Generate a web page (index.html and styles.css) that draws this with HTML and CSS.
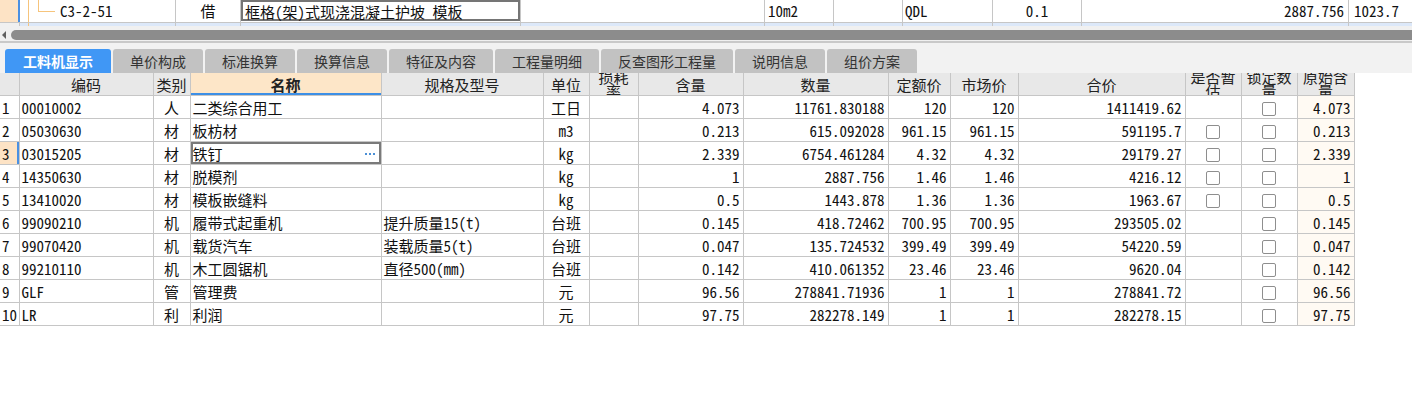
FILE: index.html
```html
<!DOCTYPE html>
<html lang="zh-CN">
<head>
    <meta charset="UTF-8">
    <title>工料机显示</title>
    <link rel="stylesheet" href="styles.css">
</head>
<body>
    <div class="tree-row">
        <div class="c c-hd"></div>
        <div class="c c-code"><span class="tree-v"></span><span class="tree-l"></span>C3-2-51</div>
        <div class="c c-type">借</div>
        <div class="c c-name"><div class="editor">框格(架)式现浇混凝土护坡 模板</div></div>
        <div class="c c-spec"></div>
        <div class="c c-unit">10m2</div>
        <div class="c c-blank"></div>
        <div class="c c-qdl">QDL</div>
        <div class="c c-qty">0.1</div>
        <div class="c c-amt">2887.756</div>
        <div class="c c-last">1023.7</div>
    </div>
    <div class="tree-row peek">
        <div class="c c-hd"></div>
        <div class="c c-code"><span class="tree-v"></span></div>
        <div class="c c-type"></div>
        <div class="c c-name"></div>
        <div class="c c-spec"></div>
        <div class="c c-unit"></div>
        <div class="c c-blank"></div>
        <div class="c c-qdl"></div>
        <div class="c c-qty"></div>
        <div class="c c-amt"></div>
        <div class="c c-last"></div>
    </div>

    <div class="hscroll">
        <span class="arrow"></span>
        <div class="thumb"></div>
    </div>

    <div class="tabs">
        <div class="tab active">工料机显示</div>
        <div class="tab">单价构成</div>
        <div class="tab">标准换算</div>
        <div class="tab">换算信息</div>
        <div class="tab">特征及内容</div>
        <div class="tab">工程量明细</div>
        <div class="tab">反查图形工程量</div>
        <div class="tab">说明信息</div>
        <div class="tab">组价方案</div>
    </div>

    <table class="grid">
        <colgroup>
            <col class="w-rn"><col class="w-code"><col class="w-type"><col class="w-name"><col class="w-spec">
            <col class="w-unit"><col class="w-loss"><col class="w-cont"><col class="w-qty"><col class="w-price">
            <col class="w-mkt"><col class="w-sum"><col class="w-chk"><col class="w-chk"><col class="w-orig">
        </colgroup>
        <thead>
            <tr>
                <th></th>
                <th>编码</th>
                <th>类别</th>
                <th class="sel">名称</th>
                <th>规格及型号</th>
                <th>单位</th>
                <th><div class="two"><span>损耗率</span></div></th>
                <th>含量</th>
                <th>数量</th>
                <th>定额价</th>
                <th>市场价</th>
                <th>合价</th>
                <th><div class="two"><span>是否暂估</span></div></th>
                <th><div class="two"><span>锁定数量</span></div></th>
                <th><div class="two"><span>原始含量</span></div></th>
            </tr>
        </thead>
        <tbody>
            <tr>
                <td class="rn">1</td><td>00010002</td><td class="ctr">人</td><td>二类综合用工</td><td></td>
                <td class="ctr">工日</td><td></td><td class="num">4.073</td><td class="num">11761.830188</td><td class="num">120</td>
                <td class="num">120</td><td class="num">1411419.62</td><td></td><td class="ctr"><span class="cb"></span></td><td class="num orig">4.073</td>
            </tr>
            <tr>
                <td class="rn">2</td><td>05030630</td><td class="ctr">材</td><td>板枋材</td><td></td>
                <td class="ctr">m3</td><td></td><td class="num">0.213</td><td class="num">615.092028</td><td class="num">961.15</td>
                <td class="num">961.15</td><td class="num">591195.7</td><td class="ctr"><span class="cb"></span></td><td class="ctr"><span class="cb"></span></td><td class="num orig">0.213</td>
            </tr>
            <tr class="current">
                <td class="rn">3</td><td>03015205</td><td class="ctr">材</td>
                <td class="editing">铁钉<svg class="more" width="11" height="3" viewBox="0 0 11 3"><rect x="0" y="0" width="2" height="2"/><rect x="4" y="0" width="2" height="2"/><rect x="8" y="0" width="2" height="2"/></svg></td>
                <td></td>
                <td class="ctr">kg</td><td></td><td class="num">2.339</td><td class="num">6754.461284</td><td class="num">4.32</td>
                <td class="num">4.32</td><td class="num">29179.27</td><td class="ctr"><span class="cb"></span></td><td class="ctr"><span class="cb"></span></td><td class="num orig">2.339</td>
            </tr>
            <tr>
                <td class="rn">4</td><td>14350630</td><td class="ctr">材</td><td>脱模剂</td><td></td>
                <td class="ctr">kg</td><td></td><td class="num">1</td><td class="num">2887.756</td><td class="num">1.46</td>
                <td class="num">1.46</td><td class="num">4216.12</td><td class="ctr"><span class="cb"></span></td><td class="ctr"><span class="cb"></span></td><td class="num orig">1</td>
            </tr>
            <tr>
                <td class="rn">5</td><td>13410020</td><td class="ctr">材</td><td>模板嵌缝料</td><td></td>
                <td class="ctr">kg</td><td></td><td class="num">0.5</td><td class="num">1443.878</td><td class="num">1.36</td>
                <td class="num">1.36</td><td class="num">1963.67</td><td class="ctr"><span class="cb"></span></td><td class="ctr"><span class="cb"></span></td><td class="num orig">0.5</td>
            </tr>
            <tr>
                <td class="rn">6</td><td>99090210</td><td class="ctr">机</td><td>履带式起重机</td><td>提升质量15(t)</td>
                <td class="ctr">台班</td><td></td><td class="num">0.145</td><td class="num">418.72462</td><td class="num">700.95</td>
                <td class="num">700.95</td><td class="num">293505.02</td><td></td><td class="ctr"><span class="cb"></span></td><td class="num orig">0.145</td>
            </tr>
            <tr>
                <td class="rn">7</td><td>99070420</td><td class="ctr">机</td><td>载货汽车</td><td>装载质量5(t)</td>
                <td class="ctr">台班</td><td></td><td class="num">0.047</td><td class="num">135.724532</td><td class="num">399.49</td>
                <td class="num">399.49</td><td class="num">54220.59</td><td></td><td class="ctr"><span class="cb"></span></td><td class="num orig">0.047</td>
            </tr>
            <tr>
                <td class="rn">8</td><td>99210110</td><td class="ctr">机</td><td>木工圆锯机</td><td>直径500(mm)</td>
                <td class="ctr">台班</td><td></td><td class="num">0.142</td><td class="num">410.061352</td><td class="num">23.46</td>
                <td class="num">23.46</td><td class="num">9620.04</td><td></td><td class="ctr"><span class="cb"></span></td><td class="num orig">0.142</td>
            </tr>
            <tr>
                <td class="rn">9</td><td>GLF</td><td class="ctr">管</td><td>管理费</td><td></td>
                <td class="ctr">元</td><td></td><td class="num">96.56</td><td class="num">278841.71936</td><td class="num">1</td>
                <td class="num">1</td><td class="num">278841.72</td><td></td><td class="ctr"><span class="cb"></span></td><td class="num orig">96.56</td>
            </tr>
            <tr>
                <td class="rn">10</td><td>LR</td><td class="ctr">利</td><td>利润</td><td></td>
                <td class="ctr">元</td><td></td><td class="num">97.75</td><td class="num">282278.149</td><td class="num">1</td>
                <td class="num">1</td><td class="num">282278.15</td><td></td><td class="ctr"><span class="cb"></span></td><td class="num orig">97.75</td>
            </tr>
        </tbody>
    </table>
</body>
</html>
```

FILE: styles.css
```css
body {
    margin: 0;
    background-color: #fff;
    font-family: "Noto Sans Mono CJK SC", "Noto Sans CJK SC", monospace;
    font-size: 15px;
    color: #111;
    overflow: hidden;
}

/* parent row of the upper grid */
.tree-row {
    display: flex;
    height: 23px;
    border-bottom: 1px solid #c6c6c6;
    box-sizing: border-box;
    white-space: nowrap;
}
.tree-row .c {
    box-sizing: border-box;
    border-right: 1px solid #c6c6c6;
    line-height: 22px;
    overflow: hidden;
    flex: none;
}
.c-hd {
    width: 20px;
    background-color: #fde3c5;
    border-right: 2px solid #4a90e2 !important;
}
.c-code {
    position: relative;
    width: 156px;
    padding-left: 40px;
}
.tree-v {
    position: absolute;
    left: 8px;
    top: 0;
    bottom: 0;
    border-left: 1px solid #f6c47c;
}
.tree-l {
    position: absolute;
    left: 18px;
    top: 0;
    width: 16px;
    height: 11px;
    border-left: 1px solid #f6c47c;
    border-bottom: 1px solid #f6c47c;
}
.c-type { width: 65px; text-align: center; }
.c-name { width: 280px; }
.editor {
    height: 21px;
    line-height: 19px;
    border: 2px solid #757575;
    box-sizing: border-box;
    padding-left: 2px;
}
.c-spec { width: 244px; }
.c-unit { width: 69px; padding-left: 3px; }
.c-blank { width: 69px; }
.c-qdl { width: 90px; padding-left: 2px; }
.c-qty { width: 89px; text-align: center; }
.c-amt { width: 267px; text-align: right; padding-right: 4px; }
.c-last { flex: 1 !important; padding-left: 5px; border-right: none !important; }

.tree-row.peek {
    height: 3px;
    border-bottom: none;
    background-color: #dce8f9;
}
.tree-row.peek .c-hd {
    background-color: #f0f0f0;
    border-right: 1px solid #c6c6c6 !important;
}

/* horizontal scrollbar */
.hscroll {
    position: relative;
    background-color: #f0f0f0;
    border-bottom: 2px solid #c9c9c9;
    padding: 4px 0 1px 11px;
}
.hscroll .arrow {
    position: absolute;
    left: 2px;
    top: 5px;
    border-right: 4px solid #606060;
    border-top: 4px solid transparent;
    border-bottom: 4px solid transparent;
}
.thumb {
    height: 10px;
    background-color: #8c8c8c;
    border-radius: 5px 0 0 5px;
}

/* tab strip */
.tabs {
    display: flex;
    gap: 2px;
    background-color: #f2f2f2;
    padding: 6px 0 0 5px;
    height: 24px;
}
.tab {
    padding: 0 17px;
    height: 24px;
    line-height: 24px;
    background-color: #c2c2c2;
    border-radius: 3px 3px 0 0;
    font-family: "Noto Sans CJK SC", sans-serif;
    font-size: 14px;
    color: #333;
}
.tab.active {
    background-color: #4097f5;
    color: #fff;
    font-weight: bold;
    padding: 0 18px;
}

/* material grid */
.grid {
    border-collapse: collapse;
    table-layout: fixed;
    width: 1354px;
}
.w-rn { width: 19px; }
.w-code { width: 134px; }
.w-type { width: 37px; }
.w-name { width: 191px; }
.w-spec { width: 162px; }
.w-unit { width: 46px; }
.w-loss { width: 49px; }
.w-cont { width: 105px; }
.w-qty { width: 145px; }
.w-price { width: 62px; }
.w-mkt { width: 68px; }
.w-sum { width: 167px; }
.w-chk { width: 56px; }
.w-orig { width: 57px; }

.grid th,
.grid td {
    border: 1px solid #c6c6c6;
    height: 22px;
    padding: 0 2px;
    white-space: nowrap;
    overflow: hidden;
}
.grid th {
    background-color: #e8e8e8;
    font-family: "Noto Sans CJK SC", sans-serif;
    font-weight: normal;
    color: #222;
    border-top: none;
}
.grid th:first-child,
.grid td:first-child {
    border-left: none;
}
.grid th.sel {
    background-color: #fde6c8;
    font-weight: bold;
    box-shadow: inset 0 -2px 0 #3d8fe6;
}
.grid .two {
    height: 22px;
    overflow: hidden;
    white-space: normal;
    line-height: 14px;
    text-align: center;
}
.grid .two span {
    display: block;
    margin-top: -3px;
}
.grid td.rn {
    padding-left: 2px;
}
.grid td.ctr { text-align: center; }
.grid td.num { text-align: right; padding-right: 3px; }
.grid td.orig { background-color: #fffaf3; }

.current td.rn {
    background-color: #fde3c5;
    box-shadow: inset -2px 0 0 #4a90e2;
}
.grid td.editing {
    position: relative;
    box-shadow: inset 0 0 0 2px #7a7a7a;
}
.more {
    position: absolute;
    right: 5px;
    top: 11px;
    fill: #4a8fd6;
}

.cb {
    display: inline-block;
    width: 12px;
    height: 12px;
    border: 1px solid #8e8e8e;
    border-radius: 2px;
    background-color: #fff;
    vertical-align: middle;
}
```
